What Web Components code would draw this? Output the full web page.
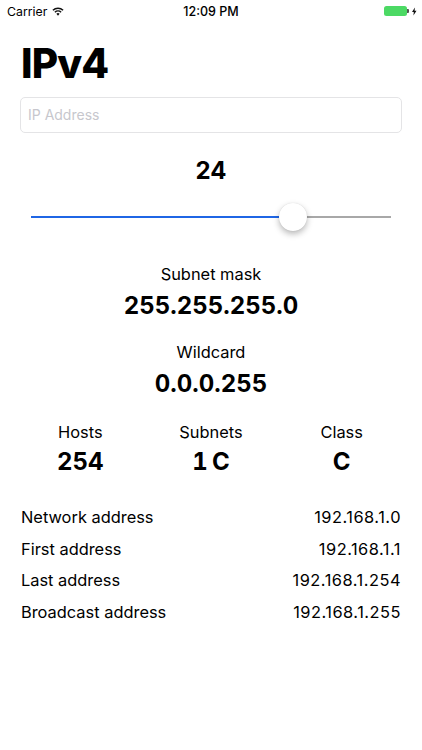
<!DOCTYPE html>
<html><head><meta charset="utf-8"><style>
html,body{margin:0;padding:0;background:#fff;height:750px;overflow:hidden}
body{font-family:Inter,"Liberation Sans",sans-serif;color:#000}
</style></head><body>
<script>
function def(name, html){
  customElements.define(name, class extends HTMLElement{
    constructor(){super();this.attachShadow({mode:'open'})}
    connectedCallback(){this.shadowRoot.innerHTML=typeof html==='function'?html(this):html}
  });
}
def('ip-app',`<style>
:host{display:flex;flex-direction:column;width:422px;height:750px;box-sizing:border-box}
</style><slot></slot>`);
def('ip-title',`<style>:host{display:block;font-size:40.5px;font-weight:800;line-height:50px;padding:0 21px;margin:17px 0 8px;letter-spacing:-.9px}</style><slot></slot>`);
def('status-bar',`<style>
:host{display:flex;align-items:center;height:22px;padding:0 5.5px 0 7px;font-size:12.3px;position:relative;flex:none}
.l{display:flex;align-items:center;gap:5px;flex:1}
.m{position:absolute;left:0;right:0;text-align:center;font-weight:500;font-size:12.5px}
.r{display:flex;align-items:center;gap:3.5px}
.b{width:23px;height:10px;background:#4cd964;border-radius:2.5px;margin-left:-1px}
.n{width:1.5px;height:4px;background:#555;margin-left:-3px;border-radius:0 1px 1px 0}
svg{display:block}
</style><div class="l"><span>Carrier</span>
<svg width="12" height="9" viewBox="0 0 13 10"><path d="M6.5 9.6 4.7 7.6a2.6 2.6 0 0 1 3.6 0zM3.6 6.5 2.5 5.3a5.8 5.8 0 0 1 8 0L9.4 6.5a4.2 4.2 0 0 0-5.8 0zM1.4 4.2.3 3a9 9 0 0 1 12.4 0l-1.1 1.2a7.4 7.4 0 0 0-10.2 0z" fill="#111"/></svg></div>
<div class="m">12:09 PM</div>
<div class="r"><div class="b"></div><div class="n"></div><svg width="4.5" height="9" viewBox="0 0 5 9"><path d="M3.2 0 0 5h2L1.6 9 5 3.6H2.9z" fill="#111"/></svg></div>`);
def('ip-field',h=>`<style>
:host{margin:0 20px;height:36px;box-sizing:border-box;border:1px solid #e4e4e6;border-radius:5px;padding:0 7px 1px;display:flex;align-items:center;font-size:14px;color:#c7c7cd}
</style>${h.getAttribute('placeholder')}`);
def('prefix-slider',h=>`<style>
:host{display:flex;flex-direction:column;align-items:center;padding-top:23px}
.v{font-size:24px;font-weight:700;line-height:30px}
.s{margin-top:17px;width:360px;height:28px;display:flex;align-items:center;position:relative}
.a{height:2px;background:#1f66e5;flex:${h.getAttribute('pct')}}
.z{height:2px;background:#a8a8a8;flex:${100-h.getAttribute('pct')}}
.k{position:absolute;left:248px;top:0;width:28px;height:28px;border-radius:50%;background:#fff;box-shadow:0 3px 6px rgba(0,0,0,.28),0 0 1px rgba(0,0,0,.15)}
</style><div class="v">${h.getAttribute('value')}</div><div class="s"><div class="a"></div><div class="z"></div><div class="k"></div></div>`);
def('big-stat',h=>`<style>
:host{display:flex;flex-direction:column;align-items:center;margin-top:${h.getAttribute('top')||0}px}
.l{font-size:16.4px;line-height:25px}
.v{font-size:24px;font-weight:700;line-height:38px;margin-bottom:15px;font-feature-settings:"tnum"}
</style><div class="l">${h.getAttribute('label')}</div><div class="v">${h.getAttribute('value')}</div>`);
def('stat-row',`<style>
:host{display:grid;grid-template-columns:repeat(3,1fr);padding:0 15px;margin-top:2px;text-align:center}
.l{font-size:16.4px;line-height:25px}.v{font-size:24px;font-weight:700;line-height:33px;word-spacing:-2px;font-feature-settings:"tnum"}
</style>
<div><div class="l">Hosts</div><div class="v">254</div></div>
<div><div class="l">Subnets</div><div class="v">1 C</div></div>
<div><div class="l">Class</div><div class="v">C</div></div>`);
def('addr-list',`<style>
:host{display:block;padding:24px 21px 0}
div{display:flex;justify-content:space-between;font-size:16.4px;line-height:31.6px}
span+span{letter-spacing:.5px}
</style>
<div><span>Network address</span><span>192.168.1.0</span></div>
<div><span>First address</span><span>192.168.1.1</span></div>
<div><span>Last address</span><span>192.168.1.254</span></div>
<div><span>Broadcast address</span><span>192.168.1.255</span></div>`);
</script>
<ip-app>
<status-bar></status-bar>
<ip-title>IPv4</ip-title>
<ip-field placeholder="IP Address"></ip-field>
<prefix-slider value="24" pct="73.6"></prefix-slider>
<big-stat top="31" label="Subnet mask" value="255.255.255.0"></big-stat>
<big-stat label="Wildcard" value="0.0.0.255"></big-stat>
<stat-row></stat-row>
<addr-list></addr-list>
</ip-app>
</body></html>
